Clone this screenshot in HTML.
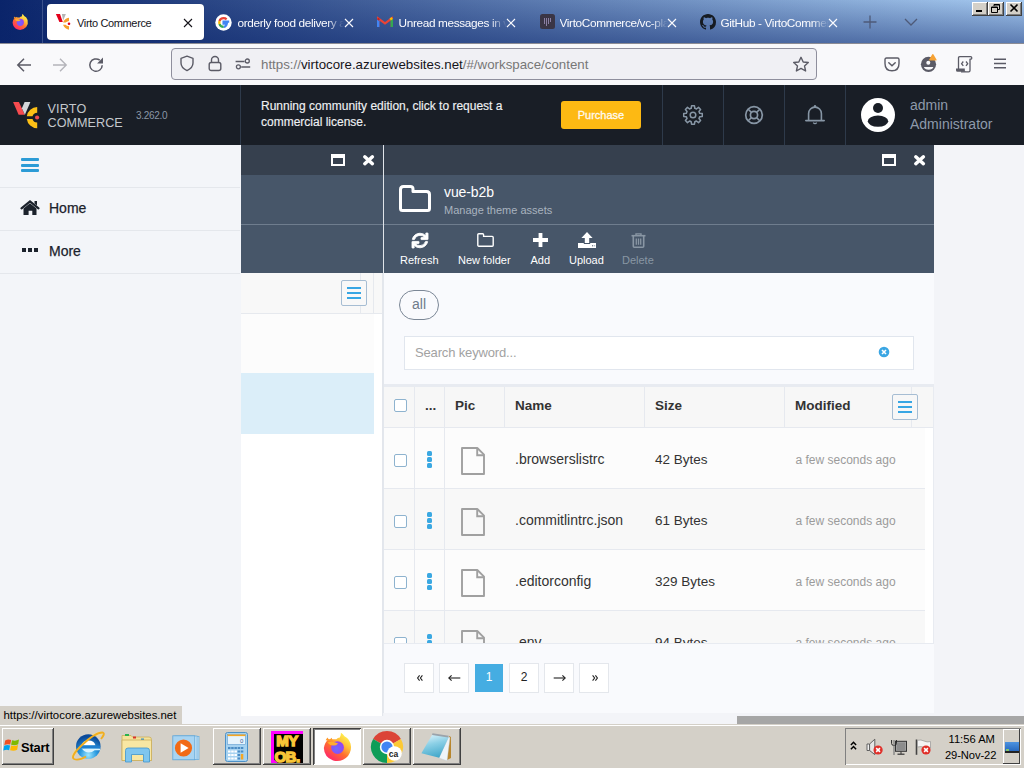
<!DOCTYPE html>
<html><head><meta charset="utf-8">
<style>
*{box-sizing:border-box}
html,body{margin:0;padding:0}
body{width:1024px;height:768px;position:relative;overflow:hidden;font-family:"Liberation Sans",sans-serif;background:#f3f4f8}
.a{position:absolute}
.t{position:absolute;white-space:nowrap;line-height:1}
svg{position:absolute;display:block;overflow:visible}
</style></head><body>

<!-- ===== TAB BAR ===== -->
<div class="a" style="left:0;top:0;width:1024px;height:43px;background:linear-gradient(90deg,#0a246a,#a6caf0)"></div>
<div class="a" style="left:0;top:0;width:1024px;height:43px;background:linear-gradient(180deg,rgba(10,36,106,0) 0%,rgba(10,36,106,0.47) 100%)"></div>
<div class="a" style="left:0;top:43px;width:1024px;height:1px;background:#8c8c94"></div>
<div class="a" style="left:42px;top:0;width:1px;height:43px;background:#3b528c"></div>

<!-- firefox logo -->
<svg style="left:11px;top:13px" width="18" height="18" viewBox="0 0 18 18">
 <defs>
  <linearGradient id="ffg" x1="0.85" y1="0.1" x2="0.25" y2="0.95">
   <stop offset="0" stop-color="#fff44f"/><stop offset="0.3" stop-color="#ffc13a"/><stop offset="0.6" stop-color="#ff6d2f"/><stop offset="1" stop-color="#ff2a68"/>
  </linearGradient>
  <radialGradient id="ffp" cx="0.4" cy="0.6" r="0.7"><stop offset="0" stop-color="#6b6bff"/><stop offset="1" stop-color="#9b3df0"/></radialGradient>
 </defs>
 <path d="M4.1 4.6 Q2 6.6 1.6 9.5 Q1.8 14.6 6.8 16.6 Q11.8 17.8 15.2 14 Q17.6 10.8 16.6 7.1 Q15.6 4 13.2 2.9 Q12.4 1.6 11.2 1 Q11.3 2.6 10.6 3.6 Q9.4 3.8 8.6 4.6 Z" fill="url(#ffg)"/>
 <path d="M2.6 5.2 L3.6 3.6 L4.6 5 L6 3.8 L6.6 5.6 Z" fill="#ff9a2a"/>
 <circle cx="9.3" cy="9.3" r="3.6" fill="url(#ffp)"/>
 <path d="M3.6 6.4 Q6.6 5.6 9.6 7 Q8.4 8.4 6.8 8.2 Q5 8.2 3.6 6.4 Z" fill="#ffae2e"/>
</svg>
<!-- active tab -->
<div class="a" style="left:47px;top:4px;width:157px;height:36px;background:#fff;border-radius:4px;box-shadow:0 0 1px rgba(0,0,0,.3)"></div>
<svg style="left:55px;top:13px" width="16" height="18" viewBox="0 0 16 18">
 <path d="M0.9 0.9 L5 0.9 L7.8 8.9 L4.4 8.9 Z" fill="#e3001b"/>
 <path d="M6.9 0.9 L10.9 0.9 L8.1 7.5 Z" fill="#b4b4b4"/>
 <path d="M8 9.5 Q9.5 5.5 14 4.8 L14 8 Q11.5 8.5 10.6 9.6 Z" fill="#f6a12d"/>
 <path d="M8 11.7 Q9.5 15.8 14 16.7 L14 13.3 Q11.5 12.8 10.6 11.7 Z" fill="#f6a12d"/>
 <circle cx="14" cy="10.75" r="1.3" fill="#e3001b"/>
</svg>
<div class="t" style="left:77px;top:17.7px;font-size:11px;letter-spacing:-0.35px;color:#15141a">Virto Commerce</div>
<svg style="left:184px;top:18.5px" width="8" height="8" viewBox="0 0 8 8"><path d="M0 0 L8 8 M8 0 L0 8" stroke="#15141a" stroke-width="1.1"/></svg>

<!-- tab 2 google -->
<svg style="left:215px;top:13.5px" width="17" height="17" viewBox="0 0 17 17">
 <circle cx="8.5" cy="8.5" r="8.2" fill="#fff"/>
 <path d="M14.2 7.6 H8.6 V9.6 H11.8 Q11.2 12.8 8.6 12.8" stroke="#4285f4" stroke-width="2.3" fill="none"/>
 <path d="M8.6 12.8 Q5.3 12.8 4.5 10" stroke="#34a853" stroke-width="2.3" fill="none"/>
 <path d="M4.5 10 Q4.1 8.5 4.5 7" stroke="#fbbc05" stroke-width="2.3" fill="none"/>
 <path d="M4.5 7 Q5.4 4.2 8.6 4.2 Q10.4 4.2 11.6 5.3" stroke="#ea4335" stroke-width="2.3" fill="none"/>
</svg>
<div class="t" style="left:237.5px;top:17.5px;font-size:11.8px;letter-spacing:-0.35px;color:#fbfbfe;width:106px;overflow:hidden;-webkit-mask-image:linear-gradient(90deg,#000 84%,transparent)">orderly food delivery and</div>
<svg style="left:345px;top:18.5px" width="8" height="8" viewBox="0 0 8 8"><path d="M0 0 L8 8 M8 0 L0 8" stroke="#fbfbfe" stroke-width="1.1"/></svg>

<!-- tab 3 gmail -->
<svg style="left:377px;top:16px" width="16" height="12" viewBox="0 0 16 12">
 <path d="M1.2 11 V2.4 L8 7.4 L14.8 2.4 V11" fill="none" stroke="#ea4335" stroke-width="2.2"/>
 <path d="M1.2 11 V3" stroke="#4285f4" stroke-width="2.4"/>
 <path d="M14.8 11 V3" stroke="#34a853" stroke-width="2.4"/>
 <path d="M13.2 3.4 L15.2 2" stroke="#fbbc04" stroke-width="2.4"/>
 <path d="M0.6 2.6 L2.4 3.9" stroke="#c5221f" stroke-width="2"/>
</svg>
<div class="t" style="left:398.5px;top:17.5px;font-size:11.8px;letter-spacing:-0.35px;color:#fbfbfe;width:108px;overflow:hidden;-webkit-mask-image:linear-gradient(90deg,#000 84%,transparent)">Unread messages in virto</div>
<svg style="left:507px;top:18.5px" width="8" height="8" viewBox="0 0 8 8"><path d="M0 0 L8 8 M8 0 L0 8" stroke="#fbfbfe" stroke-width="1.1"/></svg>

<!-- tab 4 vc-platform -->
<svg style="left:540px;top:14px" width="15" height="15" viewBox="0 0 15 15">
 <rect x="0" y="0" width="15" height="15" rx="2.5" fill="#3a3545"/>
 <path d="M4.5 4 V10 M6.5 4 V12 M8.5 4 V10 M10.5 4 V8" stroke="#8b7fa3" stroke-width="1"/>
</svg>
<div class="t" style="left:559.5px;top:17.5px;font-size:11.8px;letter-spacing:-0.35px;color:#fbfbfe;width:108px;overflow:hidden;-webkit-mask-image:linear-gradient(90deg,#000 84%,transparent)">VirtoCommerce/vc-platform</div>
<svg style="left:668px;top:18.5px" width="8" height="8" viewBox="0 0 8 8"><path d="M0 0 L8 8 M8 0 L0 8" stroke="#fbfbfe" stroke-width="1.1"/></svg>

<!-- tab 5 github -->
<svg style="left:700px;top:14px" width="16" height="16" viewBox="0 0 16 16">
 <path fill="#161b22" d="M8 0C3.58 0 0 3.58 0 8c0 3.54 2.29 6.53 5.47 7.59.4.07.55-.17.55-.38 0-.19-.01-.82-.01-1.49-2.01.37-2.53-.49-2.69-.94-.09-.23-.48-.94-.82-1.13-.28-.15-.68-.52-.01-.53.63-.01 1.08.58 1.23.82.72 1.21 1.87.87 2.33.66.07-.52.28-.87.51-1.07-1.78-.2-3.64-.89-3.64-3.95 0-.87.31-1.59.82-2.15-.08-.2-.36-1.02.08-2.12 0 0 .67-.21 2.2.82.64-.18 1.32-.27 2-.27.68 0 1.36.09 2 .27 1.53-1.04 2.2-.82 2.2-.82.44 1.1.16 1.92.08 2.12.51.56.82 1.27.82 2.15 0 3.07-1.87 3.75-3.65 3.95.29.25.54.73.54 1.48 0 1.07-.01 1.93-.01 2.2 0 .21.15.46.55.38A8.013 8.013 0 0016 8c0-4.42-3.58-8-8-8z"/>
</svg>
<div class="t" style="left:720.5px;top:17.5px;font-size:11.8px;letter-spacing:-0.35px;color:#fbfbfe;width:108px;overflow:hidden;-webkit-mask-image:linear-gradient(90deg,#000 84%,transparent)">GitHub - VirtoCommerce</div>
<svg style="left:829px;top:18.5px" width="8" height="8" viewBox="0 0 8 8"><path d="M0 0 L8 8 M8 0 L0 8" stroke="#fbfbfe" stroke-width="1.1"/></svg>

<!-- plus & chevron -->
<svg style="left:863px;top:15px" width="14" height="14" viewBox="0 0 14 14"><path d="M7 0.5 V13.5 M0.5 7 H13.5" stroke="#4e5a78" stroke-width="1.3"/></svg>
<svg style="left:904px;top:18px" width="14" height="8" viewBox="0 0 14 8"><path d="M1 1 L7 7 L13 1" stroke="#4e5a78" stroke-width="1.3" fill="none"/></svg>

<!-- window buttons -->
<div class="a" style="left:972px;top:2px;width:16px;height:14px;background:#d4d0c8;box-shadow:inset -1px -1px #404040,inset 1px 1px #fff,inset -2px -2px #808080"></div>
<div class="a" style="left:988px;top:2px;width:16px;height:14px;background:#d4d0c8;box-shadow:inset -1px -1px #404040,inset 1px 1px #fff,inset -2px -2px #808080"></div>
<div class="a" style="left:1006px;top:2px;width:16px;height:14px;background:#d4d0c8;box-shadow:inset -1px -1px #404040,inset 1px 1px #fff,inset -2px -2px #808080"></div>
<div class="a" style="left:976px;top:10px;width:6px;height:2px;background:#000"></div>
<svg style="left:991px;top:4px" width="10" height="9" viewBox="0 0 10 9"><path d="M3 0.5 H8.5 V5.5 H7 M3 0.5 V2 M0.5 3 H6.5 V8.5 H0.5 Z M0.5 3.5 H6.5 M3 1 H8.5" stroke="#000" stroke-width="1" fill="none"/></svg>
<svg style="left:1010px;top:4px" width="8" height="8" viewBox="0 0 8 8"><path d="M0.5 0.5 L7.5 7.5 M7.5 0.5 L0.5 7.5" stroke="#000" stroke-width="1.6"/></svg>


<!-- ===== NAV BAR ===== -->
<div class="a" style="left:0;top:44px;width:1024px;height:41px;background:#f9f9fb"></div>
<!-- back / fwd / reload -->
<svg style="left:16px;top:57px" width="16" height="16" viewBox="0 0 16 16"><path d="M15 8 H2 M8 1.8 L1.8 8 L8 14.2" stroke="#5b5b66" stroke-width="1.5" fill="none"/></svg>
<svg style="left:52px;top:57px" width="16" height="16" viewBox="0 0 16 16"><path d="M1 8 H14 M8 1.8 L14.2 8 L8 14.2" stroke="#b4b4ba" stroke-width="1.4" fill="none"/></svg>
<svg style="left:88px;top:57px" width="16" height="16" viewBox="0 0 16 16"><path d="M14.2 8.2 A6.2 6.2 0 1 1 11.8 3.2" stroke="#5b5b66" stroke-width="1.5" fill="none"/><path d="M15 0.6 V6.5 H9.1 Z" fill="#5b5b66"/></svg>

<!-- url box -->
<div class="a" style="left:171px;top:48px;width:646px;height:32px;background:#f0f0f4;border:1px solid #8f8f9d;border-radius:4px"></div>
<svg style="left:179px;top:55px" width="16" height="17" viewBox="0 0 16 17"><path d="M8 1.2 L14 3.4 V8 Q14 12.8 8 15.6 Q2 12.8 2 8 V3.4 Z" stroke="#5b5b66" stroke-width="1.4" fill="none" stroke-linejoin="round"/></svg>
<svg style="left:208px;top:55px" width="14" height="17" viewBox="0 0 14 17"><path d="M3.5 7.5 V5 A3.5 3.5 0 0 1 10.5 5 V7.5" stroke="#5b5b66" stroke-width="1.4" fill="none"/><rect x="1.2" y="7.5" width="11.6" height="8" rx="2" stroke="#5b5b66" stroke-width="1.4" fill="none"/></svg>
<svg style="left:235px;top:58px" width="16" height="12" viewBox="0 0 16 12"><circle cx="12.3" cy="3" r="2" stroke="#5b5b66" stroke-width="1.3" fill="none"/><circle cx="3.4" cy="8.8" r="2" stroke="#5b5b66" stroke-width="1.3" fill="none"/><path d="M0.6 3.5 H9.5 M6.2 9 H15.2" stroke="#5b5b66" stroke-width="1.3"/></svg>
<div class="t" style="left:261px;top:58px;font-size:13.3px;color:#777"><span>https://</span><span style="color:#15141a">virtocore.azurewebsites.net</span><span>/#/workspace/content</span></div>
<svg style="left:792px;top:56px" width="18" height="17" viewBox="0 0 18 17"><path d="M9 1.3 L11.2 6 L16.3 6.5 L12.5 9.9 L13.6 15 L9 12.4 L4.4 15 L5.5 9.9 L1.7 6.5 L6.8 6 Z" stroke="#5b5b66" stroke-width="1.4" fill="none" stroke-linejoin="round"/></svg>

<!-- right toolbar -->
<svg style="left:884px;top:57px" width="16" height="15" viewBox="0 0 16 15"><path d="M2.5 1 H13.5 Q15 1 15 2.5 V6.5 Q15 13.8 8 13.8 Q1 13.8 1 6.5 V2.5 Q1 1 2.5 1 Z" stroke="#5b5b66" stroke-width="1.4" fill="none"/><path d="M4.8 5.8 L8 8.8 L11.2 5.8" stroke="#5b5b66" stroke-width="1.5" fill="none" stroke-linecap="round"/></svg>
<svg style="left:920px;top:53px" width="18" height="20" viewBox="0 0 18 20">
 <circle cx="8.5" cy="11.3" r="7.6" fill="#5b5b66"/>
 <circle cx="8.3" cy="9.7" r="2" fill="#f9f9fb"/>
 <path d="M3.9 14.1 H13.4 Q12.5 16.8 8.65 16.8 Q4.8 16.8 3.9 14.1 Z" fill="#f9f9fb"/>
 <path d="M12.3 1.3 Q12.8 0.6 13.3 1.3 L16.6 6.8 Q16.9 7.5 16.1 7.5 H9.6 Q8.8 7.5 9.1 6.8 Z" fill="#f6a234" stroke="#f9f9fb" stroke-width="0"/>
</svg>
<svg style="left:955px;top:55px" width="18" height="18" viewBox="0 0 18 18">
 <path d="M3.5 14 V3 Q3.5 1.7 4.8 1.7 H15.5 Q16.8 1.7 16.8 3 Q16.8 4.2 15.6 4.2 H15 V15.5 Q15 16.8 13.7 16.8 H6" stroke="#5b5b66" stroke-width="1.3" fill="#f9f9fb" stroke-linejoin="round"/>
 <path d="M1 13.6 H9.8 V15.5 Q10.3 16.9 11.6 16.8 H2.6 Q1 16.8 1 15.2 Z" fill="#5b5b66"/>
 <path d="M8.3 6.5 L6.6 8.7 L8.3 10.9 M11 6.5 L12.7 8.7 L11 10.9" stroke="#5b5b66" stroke-width="1.3" fill="none"/>
</svg>
<svg style="left:993px;top:58px" width="14" height="11" viewBox="0 0 14 11"><path d="M1 1.2 H13 M1 5.5 H13 M1 9.8 H13" stroke="#5b5b66" stroke-width="1.4"/></svg>


<!-- ===== APP HEADER ===== -->
<div class="a" style="left:0;top:85px;width:1024px;height:60px;background:#191e26"></div>
<!-- logo -->
<svg style="left:10px;top:98px" width="35" height="34" viewBox="0 0 35 34">
 <path d="M3.1 4 H8.9 L14.8 16.8 H8.6 Z" fill="#f74b4f"/>
 <path d="M14.6 4 H20.4 L14.9 16.8 L11.9 10.3 Z" fill="#d3d6d9"/>
 <path d="M16.8 18.3 A10.6 10.6 0 0 1 27.2 9 L27.2 14.7 A4.9 4.9 0 0 0 22.5 18.3 Z" fill="#fdc015"/>
 <path d="M16.8 20.9 A10.6 10.6 0 0 0 27.2 30.2 L27.2 24.5 A4.9 4.9 0 0 1 22.5 20.9 Z" fill="#fdc015"/>
 <circle cx="27.1" cy="19.5" r="2.1" fill="#ef4b50"/>
</svg>
<div class="t" style="left:47.5px;top:103.3px;font-size:12.6px;color:#c4c8cd;letter-spacing:0.2px">VIRTO</div>
<div class="t" style="left:47.5px;top:117.3px;font-size:12.6px;color:#c4c8cd;letter-spacing:0.05px">COMMERCE</div>
<div class="t" style="left:136px;top:111px;font-size:10px;color:#8b97a6;letter-spacing:-0.3px">3.262.0</div>

<div class="a" style="left:240px;top:85px;width:1px;height:60px;background:#2e3a4a"></div>
<div class="t" style="left:261px;top:100.8px;font-size:12px;color:#eef0f3;line-height:16px;top:98.3px;-webkit-text-stroke:0.15px #eef0f3">Running community edition, click to request a<br>commercial license.</div>
<div class="a" style="left:561px;top:101px;width:80px;height:28px;background:#fdb913;border-radius:3px"></div>
<div class="t" style="left:561px;width:80px;text-align:center;top:110px;font-size:11px;color:#fffaf0;-webkit-text-stroke:0.3px #fffaf0">Purchase</div>

<div class="a" style="left:662px;top:85px;width:1px;height:60px;background:#2e3a4a"></div>
<div class="a" style="left:723px;top:85px;width:1px;height:60px;background:#2e3a4a"></div>
<div class="a" style="left:784px;top:85px;width:1px;height:60px;background:#2e3a4a"></div>
<div class="a" style="left:845px;top:85px;width:1px;height:60px;background:#2e3a4a"></div>

<!-- gear -->
<svg style="left:682px;top:104px" width="22" height="22" viewBox="0 0 22 22">
 <path d="M9.21 4.34 L9.53 1.72 L12.47 1.72 L12.79 4.34 A6.9 6.9 0 0 1 14.45 5.02 L16.53 3.40 L18.60 5.47 L16.98 7.55 A6.9 6.9 0 0 1 17.66 9.21 L20.28 9.53 L20.28 12.47 L17.66 12.79 A6.9 6.9 0 0 1 16.98 14.45 L18.60 16.53 L16.53 18.60 L14.45 16.98 A6.9 6.9 0 0 1 12.79 17.66 L12.47 20.28 L9.53 20.28 L9.21 17.66 A6.9 6.9 0 0 1 7.55 16.98 L5.47 18.60 L3.40 16.53 L5.02 14.45 A6.9 6.9 0 0 1 4.34 12.79 L1.72 12.47 L1.72 9.53 L4.34 9.21 A6.9 6.9 0 0 1 5.02 7.55 L3.40 5.47 L5.47 3.40 L7.55 5.02 A6.9 6.9 0 0 1 9.21 4.34 Z" stroke="#8796a5" stroke-width="1.5" fill="none" stroke-linejoin="round"/>
 <circle cx="11" cy="11" r="2.8" stroke="#8796a5" stroke-width="1.5" fill="none"/>
</svg>
<!-- lifebuoy -->
<svg style="left:744px;top:105px" width="20" height="20" viewBox="0 0 20 20">
 <circle cx="10" cy="10" r="8.3" stroke="#8796a5" stroke-width="1.7" fill="none"/>
 <circle cx="10" cy="10" r="3.6" stroke="#8796a5" stroke-width="1.7" fill="none"/>
 <path d="M4.2 4.2 L7.4 7.4 M15.8 4.2 L12.6 7.4 M4.2 15.8 L7.4 12.6 M15.8 15.8 L12.6 12.6" stroke="#8796a5" stroke-width="1.5"/>
</svg>
<!-- bell -->
<svg style="left:805px;top:104px" width="20" height="21" viewBox="0 0 20 21">
 <path d="M3.6 16.5 V9.5 A6.4 6.4 0 0 1 16.4 9.5 V16.5" stroke="#8796a5" stroke-width="1.6" fill="none"/>
 <path d="M0.8 16.6 H19.2" stroke="#8796a5" stroke-width="1.6" stroke-linecap="round"/>
 <circle cx="10" cy="2.3" r="1.2" fill="#8796a5"/>
 <path d="M8.2 18.6 Q10 20.6 11.8 18.6" stroke="#8796a5" stroke-width="1.3" fill="none"/>
</svg>

<!-- avatar -->
<svg style="left:861px;top:98px" width="34" height="34" viewBox="0 0 34 34">
 <circle cx="17" cy="17" r="17" fill="#fff"/>
 <circle cx="17" cy="10" r="5" fill="#191e26"/>
 <ellipse cx="17" cy="23.2" rx="10.2" ry="5.6" fill="#191e26"/>
</svg>
<div class="t" style="left:910px;top:97.6px;font-size:14px;color:#8e9aab">admin</div>
<div class="t" style="left:910px;top:116.7px;font-size:14px;color:#8e9aab">Administrator</div>


<!-- ===== SIDEBAR ===== -->
<div class="a" style="left:0;top:145px;width:241px;height:580px;background:#f3f5f9"></div>
<div class="a" style="left:21px;top:158px;width:18px;height:3px;background:#2c9bd6;border-radius:1px"></div>
<div class="a" style="left:21px;top:163.5px;width:18px;height:3px;background:#2c9bd6;border-radius:1px"></div>
<div class="a" style="left:21px;top:169px;width:18px;height:3px;background:#2c9bd6;border-radius:1px"></div>
<div class="a" style="left:0;top:187px;width:240px;height:1px;background:#e4e7ec"></div>
<div class="a" style="left:0;top:230px;width:240px;height:1px;background:#e4e7ec"></div>
<div class="a" style="left:0;top:273px;width:240px;height:1px;background:#e4e7ec"></div>
<svg style="left:20px;top:200px" width="20" height="16" viewBox="0 0 20 16">
 <path d="M1.5 8.3 L10 1.3 L18.5 8.3" stroke="#1b222c" stroke-width="2.2" fill="none" stroke-linecap="round"/>
 <path d="M14.5 1 H17 V5.5 L14.5 3.5 Z" fill="#1b222c"/>
 <path d="M3.5 8.5 L10 3.3 L16.5 8.5 V15 H12.3 V10.8 H8.6 V15 H3.5 Z" fill="#1b222c"/>
</svg>
<div class="a" style="left:22px;top:248px;width:4px;height:4px;background:#1b222c"></div>
<div class="a" style="left:28px;top:248px;width:4px;height:4px;background:#1b222c"></div>
<div class="a" style="left:34px;top:248px;width:4px;height:4px;background:#1b222c"></div>
<div class="t" style="left:49px;top:201px;font-size:14px;color:#1b222c;-webkit-text-stroke:0.25px #1b222c">Home</div>
<div class="t" style="left:49px;top:244px;font-size:14px;color:#1b222c;-webkit-text-stroke:0.25px #1b222c">More</div>


<!-- ===== BLADE 1 ===== -->
<div class="a" style="left:241px;top:145px;width:142px;height:30px;background:#36404e"></div>
<div class="a" style="left:241px;top:175px;width:142px;height:98px;background:#475669"></div>
<div class="a" style="left:241px;top:224px;width:142px;height:1px;background:#6f7d8e"></div>
<!-- maximize / close -->
<div class="a" style="left:331px;top:154px;width:14px;height:12px;border:2px solid #fff;border-top-width:4px"></div>
<svg style="left:362.9px;top:154.7px" width="11.2" height="10.5" viewBox="0 0 11.2 10.5"><path d="M1.8 1.8 L9.4 8.7 M9.4 1.8 L1.8 8.7" stroke="#fff" stroke-width="3.5" stroke-linecap="round"/></svg>
<!-- body -->
<div class="a" style="left:241px;top:273px;width:141px;height:444px;background:#fff"></div>
<div class="a" style="left:382px;top:273px;width:1px;height:444px;background:#e3e6ec"></div>
<div class="a" style="left:241px;top:273px;width:141px;height:40px;background:#f8f8f8"></div>
<div class="a" style="left:241px;top:313px;width:141px;height:1px;background:#e6e9ee"></div>
<div class="a" style="left:360px;top:273px;width:1px;height:40px;background:#e6e9ee"></div>
<div class="a" style="left:373px;top:273px;width:1px;height:40px;background:#e6e9ee"></div>
<div class="a" style="left:341px;top:280px;width:26px;height:26px;border:1px solid #a6bdd3;border-radius:2px;background:#f8f8f8"></div>
<div class="a" style="left:347px;top:287px;width:14px;height:2px;background:#37a6e4"></div>
<div class="a" style="left:347px;top:292px;width:14px;height:2px;background:#37a6e4"></div>
<div class="a" style="left:347px;top:297px;width:14px;height:2px;background:#37a6e4"></div>
<div class="a" style="left:241px;top:314px;width:133px;height:59px;background:#fcfcfc"></div>
<div class="a" style="left:241px;top:373px;width:133px;height:61px;background:#dbeef9"></div>
<div class="a" style="left:383px;top:145px;width:1px;height:572px;background:#f0f2f6"></div>


<!-- ===== BLADE 2 ===== -->
<div class="a" style="left:383px;top:145px;width:1px;height:128px;background:#dfe3e8"></div>
<div class="a" style="left:384px;top:145px;width:550px;height:30px;background:#36404e"></div>
<div class="a" style="left:384px;top:175px;width:550px;height:98px;background:#475669"></div>
<div class="a" style="left:384px;top:224px;width:550px;height:1px;background:#6f7d8e"></div>
<div class="a" style="left:882px;top:154px;width:14px;height:12px;border:2px solid #fff;border-top-width:4px"></div>
<svg style="left:913.7px;top:154.7px" width="11.2" height="10.5" viewBox="0 0 11.2 10.5"><path d="M1.8 1.8 L9.4 8.7 M9.4 1.8 L1.8 8.7" stroke="#fff" stroke-width="3.5" stroke-linecap="round"/></svg>

<!-- folder icon -->
<svg style="left:399px;top:185px" width="32" height="27" viewBox="0 0 32 27">
 <path d="M1.5 23.5 V4.5 Q1.5 1.5 4.5 1.5 H11.3 Q14 1.5 14 4 V6.5 H27.5 Q30.5 6.5 30.5 9.5 V23.5 Q30.5 25.5 28.5 25.5 H3.5 Q1.5 25.5 1.5 23.5 Z" stroke="#fff" stroke-width="3" fill="none" stroke-linejoin="round"/>
</svg>
<div class="t" style="left:444px;top:185.3px;font-size:14px;color:#fff;letter-spacing:-0.1px">vue-b2b</div>
<div class="t" style="left:444px;top:204.8px;font-size:11px;color:#a9b3bf">Manage theme assets</div>

<!-- toolbar -->
<svg style="left:412px;top:233px" width="16" height="15" viewBox="0 0 512 512" preserveAspectRatio="none"><path fill="#fff" stroke="#fff" stroke-width="28" d="M440.65 12.57l4 82.77A247.16 247.16 0 0 0 255.83 8C134.730 8 33.910 94.920 12.290 209.820A12 12 0 0 0 24.090 224h49.050a12 12 0 0 0 11.670-9.260 175.910 175.910 0 0 1 317-56.940l-101.460-4.860a12 12 0 0 0-12.570 12v47.410a12 12 0 0 0 12 12H500a12 12 0 0 0 12-12V12a12 12 0 0 0-12-12h-47.370a12 12 0 0 0-11.980 12.570zM255.830 432a175.610 175.610 0 0 1-146-77.800l101.800 4.870a12 12 0 0 0 12.570-12v-47.400a12 12 0 0 0-12-12H12a12 12 0 0 0-12 12V500a12 12 0 0 0 12 12h47.350a12 12 0 0 0 12-12.600l-4.150-82.570A247.170 247.170 0 0 0 255.830 504c121.110 0 221.930-86.920 243.550-201.820a12 12 0 0 0-11.800-14.180h-49.050a12 12 0 0 0-11.670 9.260A175.860 175.860 0 0 1 255.830 432z"/></svg>
<svg style="left:477px;top:233px" width="17" height="14" viewBox="0 0 17 14">
 <path d="M0.8 12 V1.8 Q0.8 0.8 1.8 0.8 H5.6 Q6.6 0.8 6.6 1.8 V3.4 H15.2 Q16.2 3.4 16.2 4.4 V12.2 Q16.2 13.2 15.2 13.2 H1.8 Q0.8 13.2 0.8 12 Z" stroke="#fff" stroke-width="1.4" fill="none"/>
</svg>
<svg style="left:533px;top:233px" width="15" height="14" viewBox="0 0 15 14"><path d="M5.6 0 H9.4 V5.1 H15 V8.9 H9.4 V14 H5.6 V8.9 H0 V5.1 H5.6 Z" fill="#fff"/></svg>
<svg style="left:578px;top:232px" width="18" height="16" viewBox="0 0 18 16">
 <path d="M9 0 L14.6 6 H11.2 V11 H6.8 V6 H3.4 Z" fill="#fff"/>
 <path d="M0 11 H5.8 V12 H12.2 V11 H18 V16 H0 Z" fill="#fff"/>
 <rect x="14" y="13.3" width="1.2" height="1" fill="#475669"/><rect x="16" y="13.3" width="1.2" height="1" fill="#9aa5b2"/>
</svg>
<svg style="left:631px;top:233px" width="15" height="15" viewBox="0 0 15 15">
 <path d="M0.5 2.7 H14.5" stroke="#8996a4" stroke-width="1.6"/>
 <path d="M5 2.5 V0.9 H10 V2.5" stroke="#8996a4" stroke-width="1.4" fill="none"/>
 <path d="M2.3 3 V13.2 Q2.3 14.2 3.3 14.2 H11.7 Q12.7 14.2 12.7 13.2 V3" stroke="#8996a4" stroke-width="1.6" fill="none"/>
 <path d="M5.3 5.5 V11.8 M7.5 5.5 V11.8 M9.7 5.5 V11.8" stroke="#8996a4" stroke-width="1.3"/>
</svg>
<div class="t" style="left:400px;top:254.7px;font-size:11px;color:#fff">Refresh</div>
<div class="t" style="left:458px;top:254.7px;font-size:11px;color:#fff">New folder</div>
<div class="t" style="left:530.5px;top:254.7px;font-size:11px;color:#fff">Add</div>
<div class="t" style="left:569px;top:254.7px;font-size:11px;color:#fff">Upload</div>
<div class="t" style="left:622px;top:254.7px;font-size:11px;color:#8996a4">Delete</div>

<!-- content -->
<div class="a" style="left:383px;top:273px;width:1px;height:440px;background:#e3e7ed"></div>
<div class="a" style="left:384px;top:273px;width:550px;height:440px;background:#f9fafd"></div>
<div class="a" style="left:399px;top:290px;width:40px;height:30px;border:1px solid #7b8796;border-radius:15px"></div>
<div class="t" style="left:399px;width:40px;text-align:center;top:296.8px;font-size:14px;color:#6f7b8a">all</div>
<div class="a" style="left:404px;top:336px;width:510px;height:34px;background:#fff;border:1px solid #e1e6ee"></div>
<div class="t" style="left:415px;top:346px;font-size:13px;color:#a2a2a2;letter-spacing:-0.15px">Search keyword...</div>
<svg style="left:878px;top:346px" width="12" height="12" viewBox="0 0 12 12"><circle cx="6" cy="6" r="5.3" fill="#3ba6e3"/><path d="M4 4 L8 8 M8 4 L4 8" stroke="#fff" stroke-width="1.6"/></svg>

<!-- table -->
<div class="a" style="left:384px;top:384px;width:550px;height:3px;background:#e8ebf1"></div>
<div class="a" style="left:384px;top:387px;width:549px;height:256px;background:#fff"></div>
<div class="a" style="left:384px;top:387px;width:549px;height:40px;background:#f7f7f7"></div>
<div class="a" style="left:384px;top:427px;width:549px;height:1px;background:#e6e9ef"></div>
<div class="a" style="left:933px;top:387px;width:1px;height:256px;background:#e8ebf1"></div>
<div class="a" style="left:384px;top:428px;width:549px;height:215px;overflow:hidden">
<div class="a" style="left:0;top:0px;width:541px;height:60px;background:#fcfcfc"></div>
<div class="a" style="left:0;top:60px;width:541px;height:1px;background:#e6e9ef"></div>
<div class="a" style="left:10px;top:26px;width:13px;height:13px;border:1px solid #8eb3cf;border-radius:2px;background:#fff"></div>
<div class="a" style="left:43px;top:23.1px;width:5px;height:4.6px;background:#3aa8e2;border-radius:1.5px"></div>
<div class="a" style="left:43px;top:29.2px;width:5px;height:4.6px;background:#3aa8e2;border-radius:1.5px"></div>
<div class="a" style="left:43px;top:35.3px;width:5px;height:4.6px;background:#3aa8e2;border-radius:1.5px"></div>
<svg style="left:77px;top:19px" width="24" height="28" viewBox="0 0 24 28"><path d="M1 1 H16.3 L23 7.6 V27 H1 Z" stroke="#a0a0a0" stroke-width="1.9" fill="none" stroke-linejoin="round"/><path d="M16.2 1 V8.2 H23" stroke="#a0a0a0" stroke-width="1.9" fill="none"/></svg>
<div class="t" style="left:131px;top:23.95px;font-size:14px;color:#333">.browserslistrc</div>
<div class="t" style="left:271px;top:24.57px;font-size:13.5px;color:#333">42 Bytes</div>
<div class="t" style="left:411.5px;top:26.34px;font-size:12px;color:#9b9b9b">a few seconds ago</div>
<div class="a" style="left:0;top:61px;width:541px;height:60px;background:#f8f8f8"></div>
<div class="a" style="left:0;top:121px;width:541px;height:1px;background:#e6e9ef"></div>
<div class="a" style="left:10px;top:87px;width:13px;height:13px;border:1px solid #8eb3cf;border-radius:2px;background:#fff"></div>
<div class="a" style="left:43px;top:84.1px;width:5px;height:4.6px;background:#3aa8e2;border-radius:1.5px"></div>
<div class="a" style="left:43px;top:90.2px;width:5px;height:4.6px;background:#3aa8e2;border-radius:1.5px"></div>
<div class="a" style="left:43px;top:96.3px;width:5px;height:4.6px;background:#3aa8e2;border-radius:1.5px"></div>
<svg style="left:77px;top:80px" width="24" height="28" viewBox="0 0 24 28"><path d="M1 1 H16.3 L23 7.6 V27 H1 Z" stroke="#a0a0a0" stroke-width="1.9" fill="none" stroke-linejoin="round"/><path d="M16.2 1 V8.2 H23" stroke="#a0a0a0" stroke-width="1.9" fill="none"/></svg>
<div class="t" style="left:131px;top:84.95px;font-size:14px;color:#333">.commitlintrc.json</div>
<div class="t" style="left:271px;top:85.57px;font-size:13.5px;color:#333">61 Bytes</div>
<div class="t" style="left:411.5px;top:87.34px;font-size:12px;color:#9b9b9b">a few seconds ago</div>
<div class="a" style="left:0;top:122px;width:541px;height:60px;background:#fcfcfc"></div>
<div class="a" style="left:0;top:182px;width:541px;height:1px;background:#e6e9ef"></div>
<div class="a" style="left:10px;top:148px;width:13px;height:13px;border:1px solid #8eb3cf;border-radius:2px;background:#fff"></div>
<div class="a" style="left:43px;top:145.1px;width:5px;height:4.6px;background:#3aa8e2;border-radius:1.5px"></div>
<div class="a" style="left:43px;top:151.2px;width:5px;height:4.6px;background:#3aa8e2;border-radius:1.5px"></div>
<div class="a" style="left:43px;top:157.3px;width:5px;height:4.6px;background:#3aa8e2;border-radius:1.5px"></div>
<svg style="left:77px;top:141px" width="24" height="28" viewBox="0 0 24 28"><path d="M1 1 H16.3 L23 7.6 V27 H1 Z" stroke="#a0a0a0" stroke-width="1.9" fill="none" stroke-linejoin="round"/><path d="M16.2 1 V8.2 H23" stroke="#a0a0a0" stroke-width="1.9" fill="none"/></svg>
<div class="t" style="left:131px;top:145.95px;font-size:14px;color:#333">.editorconfig</div>
<div class="t" style="left:271px;top:146.57px;font-size:13.5px;color:#333">329 Bytes</div>
<div class="t" style="left:411.5px;top:148.34px;font-size:12px;color:#9b9b9b">a few seconds ago</div>
<div class="a" style="left:0;top:183px;width:541px;height:60px;background:#f8f8f8"></div>
<div class="a" style="left:0;top:243px;width:541px;height:1px;background:#e6e9ef"></div>
<div class="a" style="left:10px;top:209px;width:13px;height:13px;border:1px solid #8eb3cf;border-radius:2px;background:#fff"></div>
<div class="a" style="left:43px;top:206.1px;width:5px;height:4.6px;background:#3aa8e2;border-radius:1.5px"></div>
<div class="a" style="left:43px;top:212.2px;width:5px;height:4.6px;background:#3aa8e2;border-radius:1.5px"></div>
<div class="a" style="left:43px;top:218.3px;width:5px;height:4.6px;background:#3aa8e2;border-radius:1.5px"></div>
<svg style="left:77px;top:202px" width="24" height="28" viewBox="0 0 24 28"><path d="M1 1 H16.3 L23 7.6 V27 H1 Z" stroke="#a0a0a0" stroke-width="1.9" fill="none" stroke-linejoin="round"/><path d="M16.2 1 V8.2 H23" stroke="#a0a0a0" stroke-width="1.9" fill="none"/></svg>
<div class="t" style="left:131px;top:206.95px;font-size:14px;color:#333">.env</div>
<div class="t" style="left:271px;top:207.57px;font-size:13.5px;color:#333">94 Bytes</div>
<div class="t" style="left:411.5px;top:209.34px;font-size:12px;color:#9b9b9b">a few seconds ago</div>
</div>
<!-- column lines header -->
<div class="a" style="left:414px;top:387px;width:1px;height:256px;background:#e6e9ef"></div>
<div class="a" style="left:444px;top:387px;width:1px;height:256px;background:#e6e9ef"></div>
<div class="a" style="left:504px;top:387px;width:1px;height:40px;background:#e6e9ef"></div>
<div class="a" style="left:644px;top:387px;width:1px;height:40px;background:#e6e9ef"></div>
<div class="a" style="left:784px;top:387px;width:1px;height:40px;background:#e6e9ef"></div>
<div class="a" style="left:911px;top:387px;width:1px;height:40px;background:#e6e9ef"></div>
<div class="a" style="left:394px;top:399px;width:13px;height:13px;border:1px solid #8eb3cf;border-radius:2px;background:#fff"></div>
<div class="t" style="left:425px;top:399.4px;font-size:13.5px;font-weight:bold;color:#333">...</div>
<div class="t" style="left:455px;top:399.4px;font-size:13.5px;font-weight:bold;color:#333">Pic</div>
<div class="t" style="left:515px;top:399.4px;font-size:13.5px;font-weight:bold;color:#333">Name</div>
<div class="t" style="left:655px;top:399.4px;font-size:13.5px;font-weight:bold;color:#333">Size</div>
<div class="t" style="left:795px;top:399.4px;font-size:13.5px;font-weight:bold;color:#333">Modified</div>
<div class="a" style="left:892px;top:394px;width:26px;height:26px;border:1px solid #a6bdd3;border-radius:2px;background:#f7f7f7"></div>
<div class="a" style="left:898px;top:401px;width:14px;height:2px;background:#37a6e4"></div>
<div class="a" style="left:898px;top:406px;width:14px;height:2px;background:#37a6e4"></div>
<div class="a" style="left:898px;top:411px;width:14px;height:2px;background:#37a6e4"></div>

<div class="a" style="left:384px;top:643px;width:550px;height:1px;background:#e8ebf1"></div>
<!-- pagination -->
<div class="a" style="left:404px;top:663px;width:30px;height:30px;background:#fff;border:1px solid #e4e7ec"></div>
<div class="a" style="left:439px;top:663px;width:30px;height:30px;background:#fff;border:1px solid #e4e7ec"></div>
<div class="a" style="left:475px;top:664px;width:28px;height:28px;background:#45ade2"></div>
<div class="a" style="left:509px;top:663px;width:30px;height:30px;background:#fff;border:1px solid #e4e7ec"></div>
<div class="a" style="left:544px;top:663px;width:30px;height:30px;background:#fff;border:1px solid #e4e7ec"></div>
<div class="a" style="left:579px;top:663px;width:30px;height:30px;background:#fff;border:1px solid #e4e7ec"></div>
<svg style="left:416.5px;top:674.5px" width="6" height="6" viewBox="0 0 6 6"><path d="M2.6 0.4 L0.6 3 L2.6 5.6 M5.4 0.4 L3.4 3 L5.4 5.6" stroke="#222" stroke-width="1.1" fill="none"/></svg>
<svg style="left:447.5px;top:674.5px" width="13" height="6" viewBox="0 0 13 6"><path d="M1 3 H12.3" stroke="#222" stroke-width="1.1"/><path d="M3.6 0.3 L0.8 3 L3.6 5.7" stroke="#222" stroke-width="1.1" fill="none"/></svg>
<div class="t" style="left:475px;width:28px;text-align:center;top:670.6px;font-size:12px;color:#fff">1</div>
<div class="t" style="left:509px;width:30px;text-align:center;top:670.6px;font-size:12px;color:#222">2</div>
<svg style="left:552.5px;top:674.5px" width="13" height="6" viewBox="0 0 13 6"><path d="M0.7 3 H12" stroke="#222" stroke-width="1.1"/><path d="M9.4 0.3 L12.2 3 L9.4 5.7" stroke="#222" stroke-width="1.1" fill="none"/></svg>
<svg style="left:591.5px;top:674.5px" width="6" height="6" viewBox="0 0 6 6"><path d="M0.6 0.4 L2.6 3 L0.6 5.6 M3.4 0.4 L5.4 3 L3.4 5.6" stroke="#222" stroke-width="1.1" fill="none"/></svg>
<div class="a" style="left:934px;top:145px;width:90px;height:572px;background:#f3f4f8"></div>


<!-- ===== BOTTOM ===== -->
<!-- sidebar continuation white strip / scroll -->
<div class="a" style="left:241px;top:716px;width:783px;height:8px;background:#f3f4f8"></div>
<div class="a" style="left:737px;top:716px;width:287px;height:8px;background:#a6a6a6"></div>
<!-- status tooltip -->
<div class="a" style="left:0;top:706px;width:182px;height:18px;background:#d4d0c8"></div>
<div class="t" style="left:3.5px;top:710.3px;font-size:11.4px;color:#000">https://virtocore.azurewebsites.net</div>

<!-- taskbar -->
<div class="a" style="left:0;top:724px;width:1024px;height:44px;background:#d4d0c8"></div>
<div class="a" style="left:0;top:725px;width:1024px;height:1px;background:#fff"></div>
<!-- start button -->
<div class="a" style="left:2px;top:728px;width:52px;height:37px;background:#d4d0c8;box-shadow:inset -1px -1px #404040,inset 1px 1px #fff,inset -2px -2px #808080"></div>
<svg style="left:4px;top:738px" width="16" height="15" viewBox="0 0 16 15">
 <path d="M1.2 2.5 Q4 0.8 7.2 2 L6.2 6.6 Q3.4 5.6 0.3 7 Z" fill="#f25022"/>
 <path d="M8 2.2 Q11.6 3.4 15 1.6 L14.2 6.3 Q11 8 7.1 6.8 Z" fill="#7fba00"/>
 <path d="M0.2 7.8 Q3.2 6.4 6.1 7.4 L5.1 12.2 Q2.5 11.3 -0.7 12.6 Z" fill="#00a4ef"/>
 <path d="M7 7.6 Q10.8 8.8 14 7.1 L13.2 11.8 Q10 13.5 6.1 12.3 Z" fill="#ffb900"/>
</svg>
<div class="t" style="left:21px;top:741.5px;font-size:12.9px;font-weight:bold;color:#000;letter-spacing:-0.2px">Start</div>

<!-- IE -->
<svg style="left:70px;top:731px" width="36" height="32" viewBox="0 0 36 32">
 <defs><radialGradient id="ieg" cx="0.5" cy="0.85" r="0.75"><stop offset="0" stop-color="#9be6ff"/><stop offset="0.45" stop-color="#2b9be0"/><stop offset="1" stop-color="#0a4a9a"/></radialGradient></defs>
 <path d="M4 27 Q1 24 12 13 Q24 2 32 2.2" stroke="#f7e18a" stroke-width="4" fill="none" opacity="0.5"/>
 <circle cx="18.3" cy="15.5" r="12.3" fill="url(#ieg)"/>
 <path d="M11.6 14.2 Q12.6 9.6 18.5 9.4 Q24.4 9.6 25.4 14.2 Z" fill="#fff"/>
 <path d="M11.3 17.6 H29.8 L30.4 19.2 H24.6 Q22.2 21.4 18.8 21.4 Q14.4 21.2 12.4 18.2 Z" fill="#d8f3ff"/>
 <path d="M11 16 H30" stroke="#1e7fd0" stroke-width="2.6"/>
 <path d="M4 28 Q0 25.5 12 14 Q26 1 33 1.6 Q35.5 2.5 31 8" stroke="#f2ae1d" stroke-width="1.9" fill="none"/>
 <path d="M4 28 Q8.5 30 16 25.5" stroke="#f2ae1d" stroke-width="1.9" fill="none"/>
</svg>
<!-- explorer -->
<svg style="left:121px;top:733px" width="32" height="30" viewBox="0 0 32 30">
 <path d="M1 2.5 H10 L11.5 4 H28 Q30.5 4 30.5 6.5 V27.5 H1 Z" fill="#f5e39b" stroke="#c9ad5d" stroke-width="0.8"/>
 <rect x="4" y="1" width="4" height="2" fill="#2bb24c"/><rect x="12" y="3.5" width="3" height="2" fill="#d9342b"/><rect x="20" y="5.5" width="3" height="2" fill="#2a8fd8"/>
 <path d="M1 7 H30.5 V27.5 H1 Z" fill="#f8e7a3" stroke="#c9ad5d" stroke-width="0.8"/>
 <path d="M4.5 29 V17.5 Q4.5 15 7 15 H26 Q28.5 15 28.5 17.5 V29 H22.5 V21.5 H10.5 V29 Z" fill="#7fc6ef" stroke="#3f95cf" stroke-width="0.8"/>
</svg>
<!-- media player -->
<svg style="left:172px;top:735px" width="32" height="27" viewBox="0 0 32 27">
 <rect x="5" y="1.5" width="22" height="23" fill="#bfe0f6" stroke="#6fb0dd" stroke-width="0.8"/>
 <rect x="3" y="1" width="22" height="23.5" fill="#cbe6f8" stroke="#6fb0dd" stroke-width="0.8"/>
 <rect x="0.8" y="0.8" width="22" height="24" fill="#a8d4f2" stroke="#5ea5d8" stroke-width="0.8"/>
 <circle cx="11.5" cy="13" r="8.6" fill="#f26a16"/>
 <path d="M8.6 8.2 L16.6 13 L8.6 17.8 Z" fill="#fff"/>
</svg>
<!-- calc button -->
<div class="a" style="left:213px;top:728px;width:48px;height:37px;background:#d4d0c8;box-shadow:inset -1px -1px #404040,inset 1px 1px #fff,inset -2px -2px #808080"></div>
<svg style="left:225px;top:732px" width="23" height="30" viewBox="0 0 23 30">
 <rect x="0.5" y="0.5" width="22" height="29" rx="2" fill="#a6d2f0" stroke="#4d91c8"/>
 <rect x="2.5" y="2.5" width="18" height="10" fill="#e8f4fc" stroke="#5e9bd0" stroke-width="0.6"/>
 <rect x="2.5" y="2.5" width="18" height="1.6" fill="#f5a623"/>
 <text x="15" y="11" font-size="6" font-family="Liberation Sans" fill="#3e5d90">0</text>
 <g fill="#4b8cc4"><rect x="3" y="15" width="2.5" height="2"/><rect x="6.2" y="15" width="2.5" height="2"/><rect x="9.4" y="15" width="2.5" height="2"/><rect x="12.6" y="15" width="2.5" height="2"/><rect x="15.8" y="15" width="2.5" height="2"/></g>
 <g fill="#fff"><rect x="3" y="18.5" width="2.5" height="2"/><rect x="6.2" y="18.5" width="2.5" height="2"/><rect x="9.4" y="18.5" width="2.5" height="2"/><rect x="3" y="22" width="2.5" height="2"/><rect x="6.2" y="22" width="2.5" height="2"/><rect x="9.4" y="22" width="2.5" height="2"/><rect x="3" y="25.5" width="2.5" height="2"/><rect x="6.2" y="25.5" width="2.5" height="2"/><rect x="9.4" y="25.5" width="2.5" height="2"/></g>
 <g fill="#4b8cc4"><rect x="12.6" y="18.5" width="2.5" height="2"/><rect x="15.8" y="18.5" width="2.5" height="2"/><rect x="12.6" y="22" width="2.5" height="2"/><rect x="12.6" y="25.5" width="2.5" height="2"/></g>
 <rect x="15.8" y="22" width="2.5" height="5.5" fill="#f5a623"/>
</svg>
<!-- MYOB -->
<div class="a" style="left:263px;top:728px;width:48px;height:37px;background:#d4d0c8;box-shadow:inset -1px -1px #404040,inset 1px 1px #fff,inset -2px -2px #808080"></div>
<svg style="left:271px;top:731px" width="32" height="32" viewBox="0 0 32 32">
 <rect x="0" y="0" width="32" height="32" fill="#000"/>
 <path d="M0 0 H32 V3 H3 V32 H0 Z" fill="#ff00ff"/>
 <path d="M0 26 L7 32 H0 Z" fill="#ff00ff"/>
 <text x="16" y="15" text-anchor="middle" font-size="15" font-weight="bold" font-family="Liberation Sans" fill="#f8c537" stroke="#f8c537" stroke-width="1.4" letter-spacing="-0.5">MY</text>
 <text x="16" y="30.5" text-anchor="middle" font-size="15" font-weight="bold" font-family="Liberation Sans" fill="#f8c537" stroke="#f8c537" stroke-width="1.4" letter-spacing="-0.5">OB.</text>
</svg>
<!-- firefox pressed -->
<div class="a" style="left:313px;top:728px;width:48px;height:37px;background:#fff;box-shadow:inset 1px 1px #404040,inset -1px -1px #fff,inset 2px 2px #808080"></div>
<svg style="left:321px;top:731px" width="32" height="32" viewBox="0 0 18 18">
 <defs>
  <linearGradient id="ffg2" x1="0.85" y1="0.1" x2="0.25" y2="0.95">
   <stop offset="0" stop-color="#fff44f"/><stop offset="0.3" stop-color="#ffc13a"/><stop offset="0.6" stop-color="#ff6d2f"/><stop offset="1" stop-color="#ff2a68"/>
  </linearGradient>
  <radialGradient id="ffp2" cx="0.4" cy="0.6" r="0.7"><stop offset="0" stop-color="#6b6bff"/><stop offset="1" stop-color="#9b3df0"/></radialGradient>
 </defs>
 <path d="M4.1 4.6 Q2 6.6 1.6 9.5 Q1.8 14.6 6.8 16.6 Q11.8 17.8 15.2 14 Q17.6 10.8 16.6 7.1 Q15.6 4 13.2 2.9 Q12.4 1.6 11.2 1 Q11.3 2.6 10.6 3.6 Q9.4 3.8 8.6 4.6 Z" fill="url(#ffg2)"/>
 <path d="M2.6 5.2 L3.6 3.6 L4.6 5 L6 3.8 L6.6 5.6 Z" fill="#ff9a2a"/>
 <circle cx="9.3" cy="9.3" r="3.6" fill="url(#ffp2)"/>
 <path d="M3.6 6.4 Q6.6 5.6 9.6 7 Q8.4 8.4 6.8 8.2 Q5 8.2 3.6 6.4 Z" fill="#ffae2e"/>
</svg>
<!-- chrome -->
<div class="a" style="left:363px;top:728px;width:48px;height:37px;background:#d4d0c8;box-shadow:inset -1px -1px #404040,inset 1px 1px #fff,inset -2px -2px #808080"></div>
<svg style="left:370px;top:730px" width="34" height="34" viewBox="0 0 34 34">
 <path d="M17 17 L3.1 9 A16 16 0 0 1 30.9 9 Z" fill="#db4437"/>
 <path d="M17 17 L30.9 9 A16 16 0 0 1 17 33 Z" fill="#fcc934"/>
 <path d="M17 17 L17 33 A16 16 0 0 1 3.1 9 Z" fill="#0f9d58"/>
 <circle cx="17" cy="17" r="7.2" fill="#fff"/>
 <circle cx="17" cy="17" r="5.6" fill="#4285f4"/>
 <circle cx="24.5" cy="23.5" r="7.3" fill="#fff"/>
 <text x="18.8" y="26.5" font-size="8.5" font-weight="bold" font-family="Liberation Sans" fill="#222">ca</text>
</svg>
<!-- notepad -->
<div class="a" style="left:413px;top:728px;width:48px;height:37px;background:#d4d0c8;box-shadow:inset -1px -1px #404040,inset 1px 1px #fff,inset -2px -2px #808080"></div>
<svg style="left:414px;top:728px" width="46" height="38" viewBox="0 0 46 38">
 <defs><linearGradient id="npg" x1="0.3" y1="0" x2="0.6" y2="1"><stop offset="0" stop-color="#d9f1fa"/><stop offset="0.4" stop-color="#8cd0e6"/><stop offset="1" stop-color="#3fa6c9"/></linearGradient></defs>
 <path d="M35 8 L37 9 V30 L33 32 Z" fill="#b8862d"/>
 <path d="M34.7 9 L36 9.5 L33 32.8 L25 30 Z" fill="#eef4f8" stroke="#c2ccd4" stroke-width="0.4"/>
 <path d="M18.3 6.4 L34.7 8.9 L25.2 29.7 L7.4 25.2 Z" fill="url(#npg)"/>
 <path d="M18.5 5.2 L34.7 7.8 L34.2 9.5 L18 7 Z" fill="#9aa3ab"/>
</svg>
<!-- tray -->
<div class="a" style="left:845px;top:728px;width:176px;height:37px;box-shadow:inset 1px 1px #808080,inset -1px -1px #fff"></div>
<svg style="left:850px;top:740.5px" width="7" height="9" viewBox="0 0 7 9"><path d="M0.9 4 L3.5 1.3 L6.1 4 M0.9 8.2 L3.5 5.5 L6.1 8.2" stroke="#000" stroke-width="1.5" fill="none"/></svg>
<svg style="left:866px;top:738px" width="18" height="18" viewBox="0 0 18 18">
 <path d="M1 6 H3.6 V12.5 H1 Z" fill="#f0f0f0" stroke="#555" stroke-width="0.9"/>
 <path d="M3.6 6 L8.8 1.2 V16.6 L3.6 12.5 Z" fill="#e6e6e6" stroke="#555" stroke-width="0.9"/>
 <circle cx="12.1" cy="12" r="4.6" fill="#e0302a"/><path d="M10.2 10.1 L14 13.9 M14 10.1 L10.2 13.9" stroke="#fff" stroke-width="1.5"/>
</svg>
<svg style="left:890px;top:739px" width="18" height="17" viewBox="0 0 18 17">
 <rect x="5.5" y="2.3" width="11" height="10" fill="#a4a4a4" stroke="#333" stroke-width="1"/>
 <rect x="6.8" y="3.6" width="8.4" height="7.4" fill="#8c8c8c"/>
 <path d="M7.5 15.2 H14.5" stroke="#333" stroke-width="1.2"/><path d="M11 12.5 V15" stroke="#333" stroke-width="1"/>
 <path d="M4 1 V16 M1.6 1 V4.5 Q1.8 6.6 4 6.6 Q6.2 6.6 6.4 4.5 V1" stroke="#222" stroke-width="1" fill="none"/>
 <path d="M4 1 V16" stroke="#eee" stroke-width="0.6"/>
</svg>
<svg style="left:915px;top:738px" width="18" height="18" viewBox="0 0 18 18">
 <path d="M1.5 1.5 V16.8" stroke="#444" stroke-width="1.6"/>
 <path d="M2.5 2.3 Q6 1.4 9 3 Q12 4.5 15.5 3.6 V10 Q12 11 9 9.4 Q6 8 2.5 9 Z" fill="#f4f4f4" stroke="#888" stroke-width="0.6"/>
 <circle cx="11" cy="12" r="4.6" fill="#e0302a"/><path d="M9.1 10.1 L12.9 13.9 M12.9 10.1 L9.1 13.9" stroke="#fff" stroke-width="1.5"/>
</svg>
<div class="t" style="left:948.5px;top:734.3px;font-size:11.2px;color:#000">11:56 AM</div>
<div class="t" style="left:945px;top:750.4px;font-size:11.2px;color:#000;letter-spacing:-0.1px">29-Nov-22</div>
<div class="a" style="left:1003px;top:729px;width:17px;height:35px;box-shadow:inset -1px -1px #404040,inset 1px 1px #fff"></div>
<svg style="left:1005px;top:742px" width="14" height="12" viewBox="0 0 14 12"><defs><linearGradient id="sdg" x1="0" y1="0" x2="0" y2="1"><stop offset="0" stop-color="#4d93e0"/><stop offset="1" stop-color="#1f5fb8"/></linearGradient></defs><rect x="0" y="0" width="14" height="11" fill="url(#sdg)"/><rect x="0" y="9" width="14" height="2" fill="#222"/><rect x="1" y="7" width="3" height="2" fill="#7fc36b"/></svg>


</body></html>
